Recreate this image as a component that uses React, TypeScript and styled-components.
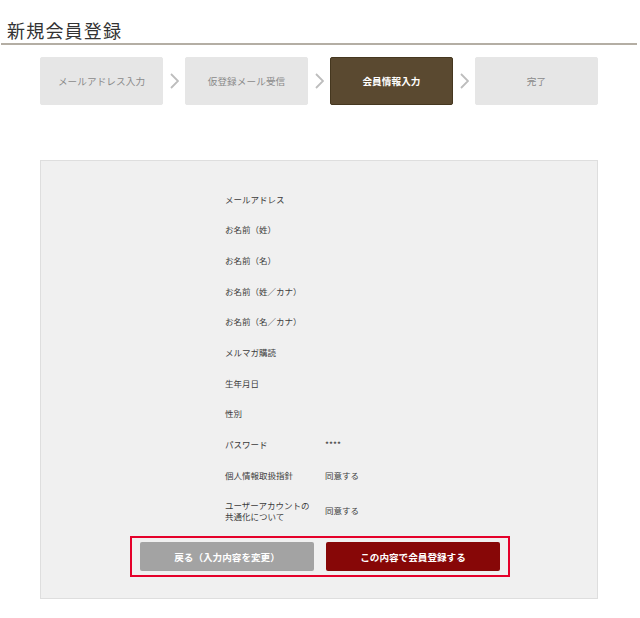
import React from "react";
import styled, { createGlobalStyle } from "styled-components";

const Global = createGlobalStyle`
  html, body { margin: 0; padding: 0; background: #fff; }
  body { font-family: "Noto Sans CJK JP", "Noto Sans", sans-serif; color: #333; }
  * { box-sizing: border-box; }
`;

const Page = styled.div`
  width: 640px;
  min-height: 618px;
`;

const Header = styled.h1`
  margin: 0 3px 0 1px;
  padding: 20px 0 3px 6px;
  font-size: 18px;
  line-height: 20px;
  font-weight: 400;
  letter-spacing: 1.2px;
  color: #333;
  border-bottom: 2px solid #b4aea4;
`;

const Steps = styled.ol`
  display: flex;
  align-items: center;
  list-style: none;
  margin: 12px 0 0 40px;
  padding: 0;
`;

const Step = styled.li<{ $active?: boolean }>`
  width: 123px;
  height: 48px;
  display: flex;
  align-items: center;
  justify-content: center;
  border-radius: 2px;
  font-size: 9.6px;
  letter-spacing: 0.1px;
  background: ${(p) => (p.$active ? "#5a4930" : "#e6e6e6")};
  color: ${(p) => (p.$active ? "#fff" : "#8a8a8a")};
  font-weight: ${(p) => (p.$active ? 700 : 400)};
  border: 1px solid ${(p) => (p.$active ? "#45371f" : "#e6e6e6")};
`;

const Arrow = styled.li`
  width: 22px;
  display: flex;
  justify-content: center;
  align-items: center;
`;

const Panel = styled.section`
  margin: 55px 0 0 40px;
  width: 558px;
  background: #f0f0f0;
  border: 1px solid #dedede;
  padding: 23px 0 21px;
`;

const List = styled.dl`
  margin: 0 0 0 184px;
  padding: 0;
`;

const Row = styled.div<{ $tall?: boolean }>`
  display: grid;
  grid-template-columns: 100px 1fr;
  align-items: center;
  padding: ${(p) => (p.$tall ? "9.3px 0" : "9.83px 0")};
  font-size: 8.5px;
  line-height: 11px;
  color: #3c3c3c;
`;

const Label = styled.dt`
  margin: 0;
`;

const Value = styled.dd`
  margin: 0;
`;

const Actions = styled.div`
  margin: 5px 0 0 89px;
  width: 380px;
  border: 2px solid #e5002a;
  padding: 4px 8px;
  display: flex;
  justify-content: center;
  gap: 12px;
`;

const Button = styled.button<{ $primary?: boolean }>`
  width: 174px;
  height: 29px;
  border: none;
  border-radius: 2px;
  font-family: "Noto Sans CJK JP", sans-serif;
  font-size: 9.6px;
  font-weight: 700;
  color: #fff;
  background: ${(p) => (p.$primary ? "#870707" : "#a3a3a3")};
  cursor: pointer;
  padding: 0;
`;

const Chevron = () => (
  <svg width="9" height="16" viewBox="0 0 9 16">
    <polyline points="1,1 8,8 1,15" fill="none" stroke="#bdbdbd" strokeWidth="1.8" />
  </svg>
);

const rows: [React.ReactNode, string][] = [
  ["メールアドレス", ""],
  ["お名前（姓）", ""],
  ["お名前（名）", ""],
  ["お名前（姓／カナ）", ""],
  ["お名前（名／カナ）", ""],
  ["メルマガ購読", ""],
  ["生年月日", ""],
  ["性別", ""],
  ["パスワード", "****"],
  ["個人情報取扱指針", "同意する"],
  [<>ユーザーアカウントの<br />共通化について</>, "同意する"],
];

const steps = ["メールアドレス入力", "仮登録メール受信", "会員情報入力", "完了"];

export default function App() {
  return (
    <Page>
      <Global />
      <Header>新規会員登録</Header>
      <Steps>
        {steps.map((s, i) => (
          <React.Fragment key={s}>
            {i > 0 && (
              <Arrow>
                <Chevron />
              </Arrow>
            )}
            <Step $active={i === 2}>{s}</Step>
          </React.Fragment>
        ))}
      </Steps>
      <Panel>
        <List>
          {rows.map(([l, v], i) => (
            <Row key={i} $tall={i === rows.length - 1}>
              <Label>{l}</Label>
              <Value>{v}</Value>
            </Row>
          ))}
        </List>
        <Actions>
          <Button>戻る（入力内容を変更）</Button>
          <Button $primary>この内容で会員登録する</Button>
        </Actions>
      </Panel>
    </Page>
  );
}
